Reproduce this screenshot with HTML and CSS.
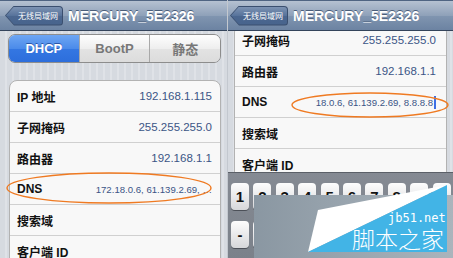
FILE: index.html
```html
<!DOCTYPE html>
<html lang="zh-CN">

<head>
    <meta charset="UTF-8">
    <meta name="viewport" content="width=device-width, initial-scale=1.0">
    <title>MERCURY_5E2326</title>
    <link rel="stylesheet" href="styles.css">
</head>

<body>

    <div class="shots">

        <!-- Left screen: DHCP details -->
        <div class="phone phone-left">
            <div class="navbar">
                <span class="back"><span class="back-inner">无线局域网</span></span>
                <span class="title">MERCURY_5E2326</span>
            </div>
            <div class="content">
                <div class="segmented">
                    <span class="seg active">DHCP</span>
                    <span class="seg">BootP</span>
                    <span class="seg">静态</span>
                </div>
                <ul class="group">
                    <li class="row"><span class="label">IP 地址</span><span class="value">192.168.1.115</span></li>
                    <li class="row"><span class="label">子网掩码</span><span class="value">255.255.255.0</span></li>
                    <li class="row"><span class="label">路由器</span><span class="value">192.168.1.1</span></li>
                    <li class="row"><span class="label">DNS</span><span class="value dns">172.18.0.6, 61.139.2.69, …</span></li>
                    <li class="row"><span class="label">搜索域</span><span class="value"></span></li>
                    <li class="row"><span class="label">客户端 ID</span><span class="value"></span></li>
                </ul>
            </div>
            <svg class="circle circle-left" width="210" height="34" viewBox="0 0 210 34">
                <ellipse cx="105" cy="17" rx="102" ry="15" fill="none" stroke="#ef7a22" stroke-width="1.4" />
            </svg>
        </div>

        <div class="divider"></div>

        <!-- Right screen: editing DNS with keyboard -->
        <div class="phone phone-right">
            <div class="navbar">
                <span class="back"><span class="back-inner">无线局域网</span></span>
                <span class="title">MERCURY_5E2326</span>
            </div>
            <div class="content content-scrolled">
                <ul class="group">
                    <li class="row"><span class="label">子网掩码</span><span class="value">255.255.255.0</span></li>
                    <li class="row"><span class="label">路由器</span><span class="value">192.168.1.1</span></li>
                    <li class="row"><span class="label">DNS</span><span class="value dns editing">18.0.6, 61.139.2.69, 8.8.8.8<i class="cursor"></i></span></li>
                    <li class="row"><span class="label">搜索域</span><span class="value"></span></li>
                    <li class="row"><span class="label">客户端 ID</span><span class="value"></span></li>
                </ul>
            </div>
            <div class="keyboard">
                <div class="key-row">
                    <span class="key">1</span><span class="key">2</span><span class="key">3</span><span class="key">4</span><span class="key">5</span>
                    <span class="key">6</span><span class="key">7</span><span class="key">8</span><span class="key">9</span><span class="key">0</span>
                </div>
                <!-- second row is hidden behind the watermark except the first key -->
                <div class="key-row">
                    <span class="key">-</span><span class="key"></span><span class="key"></span><span class="key"></span><span class="key"></span>
                    <span class="key"></span><span class="key"></span><span class="key"></span><span class="key"></span><span class="key"></span>
                </div>
            </div>
            <svg class="circle circle-right" width="160" height="26" viewBox="0 0 160 26">
                <ellipse cx="80" cy="13" rx="78" ry="12" fill="none" stroke="#ef7a22" stroke-width="1.4" />
            </svg>
            <!-- site watermark -->
            <svg class="watermark" width="199" height="74" viewBox="0 0 199 74">
                <defs>
                    <linearGradient id="wm-bg" x1="0" y1="0" x2="1" y2="0">
                        <stop offset="0" stop-color="#8a97a2" />
                        <stop offset="1" stop-color="#aab4bc" />
                    </linearGradient>
                </defs>
                <rect x="0" y="11" width="199" height="63" fill="url(#wm-bg)" />
                <polygon points="64,26 193,1 54,68" fill="#ffffff" />
                <polygon points="193,1 193,68 54,68" fill="#42b4e6" />
                <text x="134" y="38" class="wm-url">jb51.net</text>
                <text x="98" y="64" class="wm-name">脚本之家</text>
            </svg>
        </div>

    </div>

</body>

</html>
```

FILE: styles.css
```css
* {
    box-sizing: border-box;
}

body {
    margin: 0;
    width: 453px;
    height: 258px;
    overflow: hidden;
    font-family: 'Liberation Sans', 'Noto Sans CJK SC', sans-serif;
    background-color: #d9dde2;
}

.shots {
    display: flex;
    height: 258px;
}

.phone {
    position: relative;
    display: flex;
    flex-direction: column;
    height: 258px;
    overflow: hidden;
    background: repeating-linear-gradient(90deg, #d6dae0 0, #d6dae0 5px, #dfe2e7 5px, #dfe2e7 7px);
}

.phone-left {
    width: 227px;
}

.phone-right {
    width: 225px;
}

.divider {
    width: 1px;
    background-color: #c3c8cf;
}

/* Navigation bar */
.navbar {
    position: relative;
    z-index: 2;
    display: flex;
    align-items: center;
    flex: 0 0 31px;
    height: 31px;
    padding-left: 5px;
    background: linear-gradient(#b5c1d1, #8fa1b9 50%, #8095b0 51%, #6c83a2);
    border-top: 1px solid #4f6482;
    border-bottom: 1px solid #34445b;
}

.phone-right .navbar {
    padding-left: 2px;
}

.back {
    display: block;
    width: 58px;
    height: 20px;
    padding: 1px;
    background-color: #3a4f6f;
    clip-path: polygon(9px 0, 100% 0, 100% 100%, 9px 100%, 0 50%);
    border-radius: 0 4px 4px 0;
}

.back-inner {
    display: flex;
    align-items: center;
    justify-content: flex-end;
    height: 18px;
    padding-right: 4px;
    font-size: 8px;
    color: #fff;
    background: linear-gradient(#7d93b3, #56729a 50%, #4b6790 51%, #48648c);
    clip-path: polygon(8px 0, 100% 0, 100% 100%, 8px 100%, 0 50%);
    border-radius: 0 3px 3px 0;
}

.title {
    margin-left: 5px;
    font-size: 14px;
    font-weight: bold;
    color: #fff;
    text-shadow: 0 -1px 0 #4a5e7a;
}

/* Content area */
.content {
    flex: 1;
    padding: 0 6px 0 9px;
}

.content-scrolled {
    flex: 0 0 141px;
    overflow: hidden;
    padding: 0 6px 0 6px;
}

.segmented {
    display: flex;
    height: 29px;
    margin: 3px 0 0 -1px;
    border: 1px solid #8d8d8d;
    border-radius: 7px;
    overflow: hidden;
}

.seg {
    flex: 1;
    display: flex;
    align-items: center;
    justify-content: center;
    font-size: 13px;
    font-weight: bold;
    color: #777;
    background: linear-gradient(#fefefe, #eeeeee 50%, #e3e3e3 51%, #dcdcdc);
    border-left: 1px solid #a9a9a9;
}

.seg:first-child {
    border-left: none;
}

.seg.active {
    color: #fff;
    text-shadow: 0 -1px 0 #2a56a8;
    background: linear-gradient(#6ea6f3, #4b8bea 50%, #3477e2 51%, #2d6edc);
}

/* Grouped table */
.group {
    list-style: none;
    margin: 17px 0 0 0;
    padding: 0;
    background-color: #f8f8f8;
    border: 1px solid #b2b2b2;
    border-radius: 8px;
}

.content-scrolled .group {
    margin-top: -7px;
}

.row {
    display: flex;
    align-items: center;
    justify-content: space-between;
    height: 31px;
    padding: 0 8px 0 7px;
    border-top: 1px solid #d0d0d0;
}

.row:first-child {
    border-top: none;
    height: 30px;
}

.content-scrolled .row {
    padding-right: 10px;
}

.label {
    font-size: 12px;
    font-weight: bold;
    color: #111;
    white-space: nowrap;
}

.value {
    font-size: 11.5px;
    color: #3b5586;
    white-space: nowrap;
}

.value.dns {
    font-size: 9.6px;
}

.cursor {
    display: inline-block;
    width: 2px;
    height: 13px;
    margin-left: 1px;
    vertical-align: -3px;
    background-color: #3c6fe6;
}

/* Keyboard */
.keyboard {
    flex: 1;
    padding: 10px 0 0 3px;
    background: linear-gradient(#858a93, #7b818a);
    border-top: 1px solid #5b6068;
}

.key-row {
    display: flex;
    gap: 4.4px;
    margin-bottom: 11px;
}

.key {
    display: flex;
    align-items: center;
    justify-content: center;
    flex: 0 0 18px;
    height: 27px;
    font-size: 15px;
    font-weight: bold;
    color: #111;
    background: linear-gradient(#fdfdfd, #e6e6e8 60%, #d6d7da);
    border-radius: 4px;
    box-shadow: 0 1px 0 #4c5058;
}

/* Overlays */
.circle {
    position: absolute;
    z-index: 3;
}

.circle-left {
    left: 4px;
    top: 171px;
}

.circle-right {
    left: 62px;
    top: 92px;
}

.watermark {
    position: absolute;
    z-index: 4;
    left: 26px;
    top: 184px;
}

.wm-url {
    font-family: 'DejaVu Sans Mono', monospace;
    font-size: 12px;
    fill: #fff;
}

.wm-name {
    font-family: 'Noto Sans CJK SC', sans-serif;
    font-size: 23px;
    font-weight: 300;
    fill: #fff;
}
```
